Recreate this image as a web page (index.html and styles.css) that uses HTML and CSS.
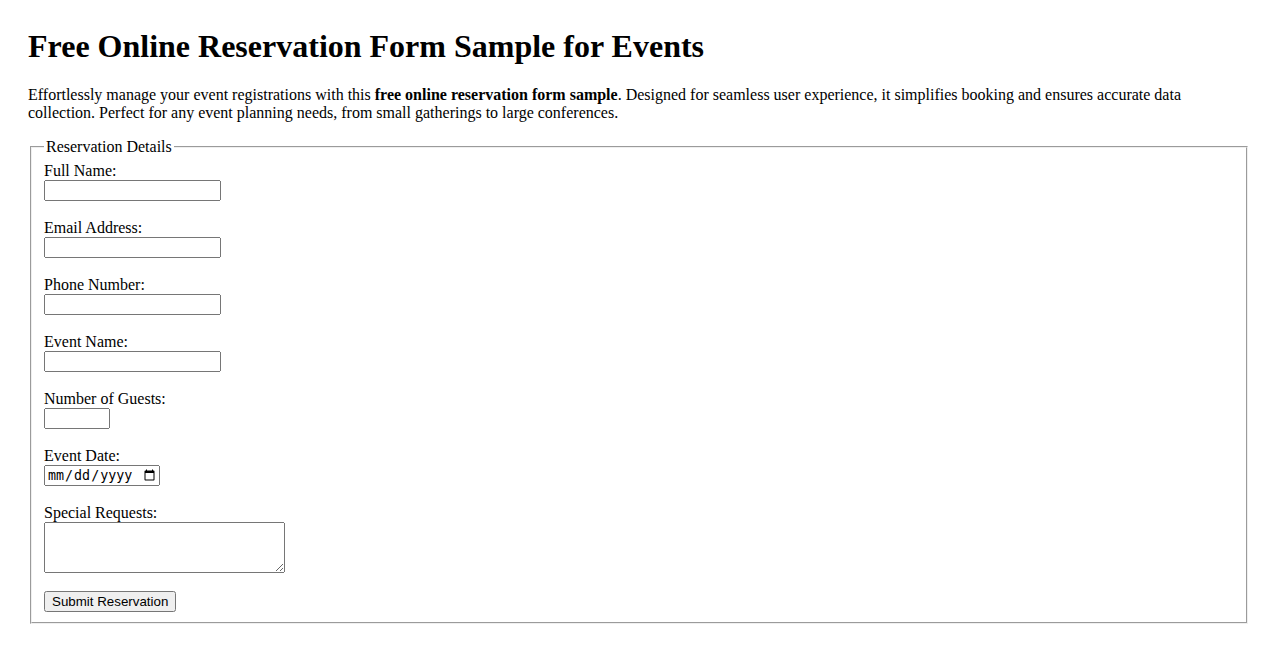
FILE: index.html
```html
<!DOCTYPE html>
<html lang="en">
<head>
  <meta charset="UTF-8" />
  <meta name="viewport" content="width=device-width, initial-scale=1.0" />
  <title>Free Online Reservation Form Sample for Events</title>
  <link rel="stylesheet" href="styles.css">
</head>
<body>
  <h1>Free Online Reservation Form Sample for Events</h1>
  <p>Effortlessly manage your event registrations with this <strong>free online reservation form sample</strong>. Designed for seamless user experience, it simplifies booking and ensures accurate data collection. Perfect for any event planning needs, from small gatherings to large conferences.</p>

  <form action="#" method="post">
    <fieldset>
      <legend>Reservation Details</legend>
      <label for="fullname">Full Name:</label><br>
      <input type="text" id="fullname" name="fullname" required><br><br>

      <label for="email">Email Address:</label><br>
      <input type="email" id="email" name="email" required><br><br>

      <label for="phone">Phone Number:</label><br>
      <input type="tel" id="phone" name="phone" required><br><br>

      <label for="eventname">Event Name:</label><br>
      <input type="text" id="eventname" name="eventname" required><br><br>

      <label for="guests">Number of Guests:</label><br>
      <input type="number" id="guests" name="guests" class="guests" min="1" required><br><br>

      <label for="eventdate">Event Date:</label><br>
      <input type="date" id="eventdate" name="eventdate" required><br><br>

      <label for="requests">Special Requests:</label><br>
      <textarea id="requests" name="requests" rows="3" cols="30"></textarea><br><br>

      <input type="submit" value="Submit Reservation">
    </fieldset>
  </form>
</body>
</html>
```

FILE: styles.css
```css
body {
  margin: 28px;
  font-family: "Liberation Serif", "Times New Roman", serif;
  color: #000;
  background: #fff;
}

h1 {
  margin-top: 0;
}

input, textarea {
  box-sizing: border-box;
}

input[type="text"],
input[type="email"],
input[type="tel"],
input[type="number"] {
  font-family: "Liberation Sans", Arial, sans-serif;
  width: 177px;
  height: 21px;
}

input[type="submit"] {
  font-family: "Liberation Sans", Arial, sans-serif;
}

input[type="date"] {
  font-family: "DejaVu Sans Mono", "Liberation Mono", monospace;
  width: 116px;
  height: 21px;
}

textarea {
  font-family: "DejaVu Sans Mono", "Liberation Mono", monospace;
  width: 241px;
  height: 51px;
  vertical-align: top;
}

input.guests {
  width: 66px;
}
```
